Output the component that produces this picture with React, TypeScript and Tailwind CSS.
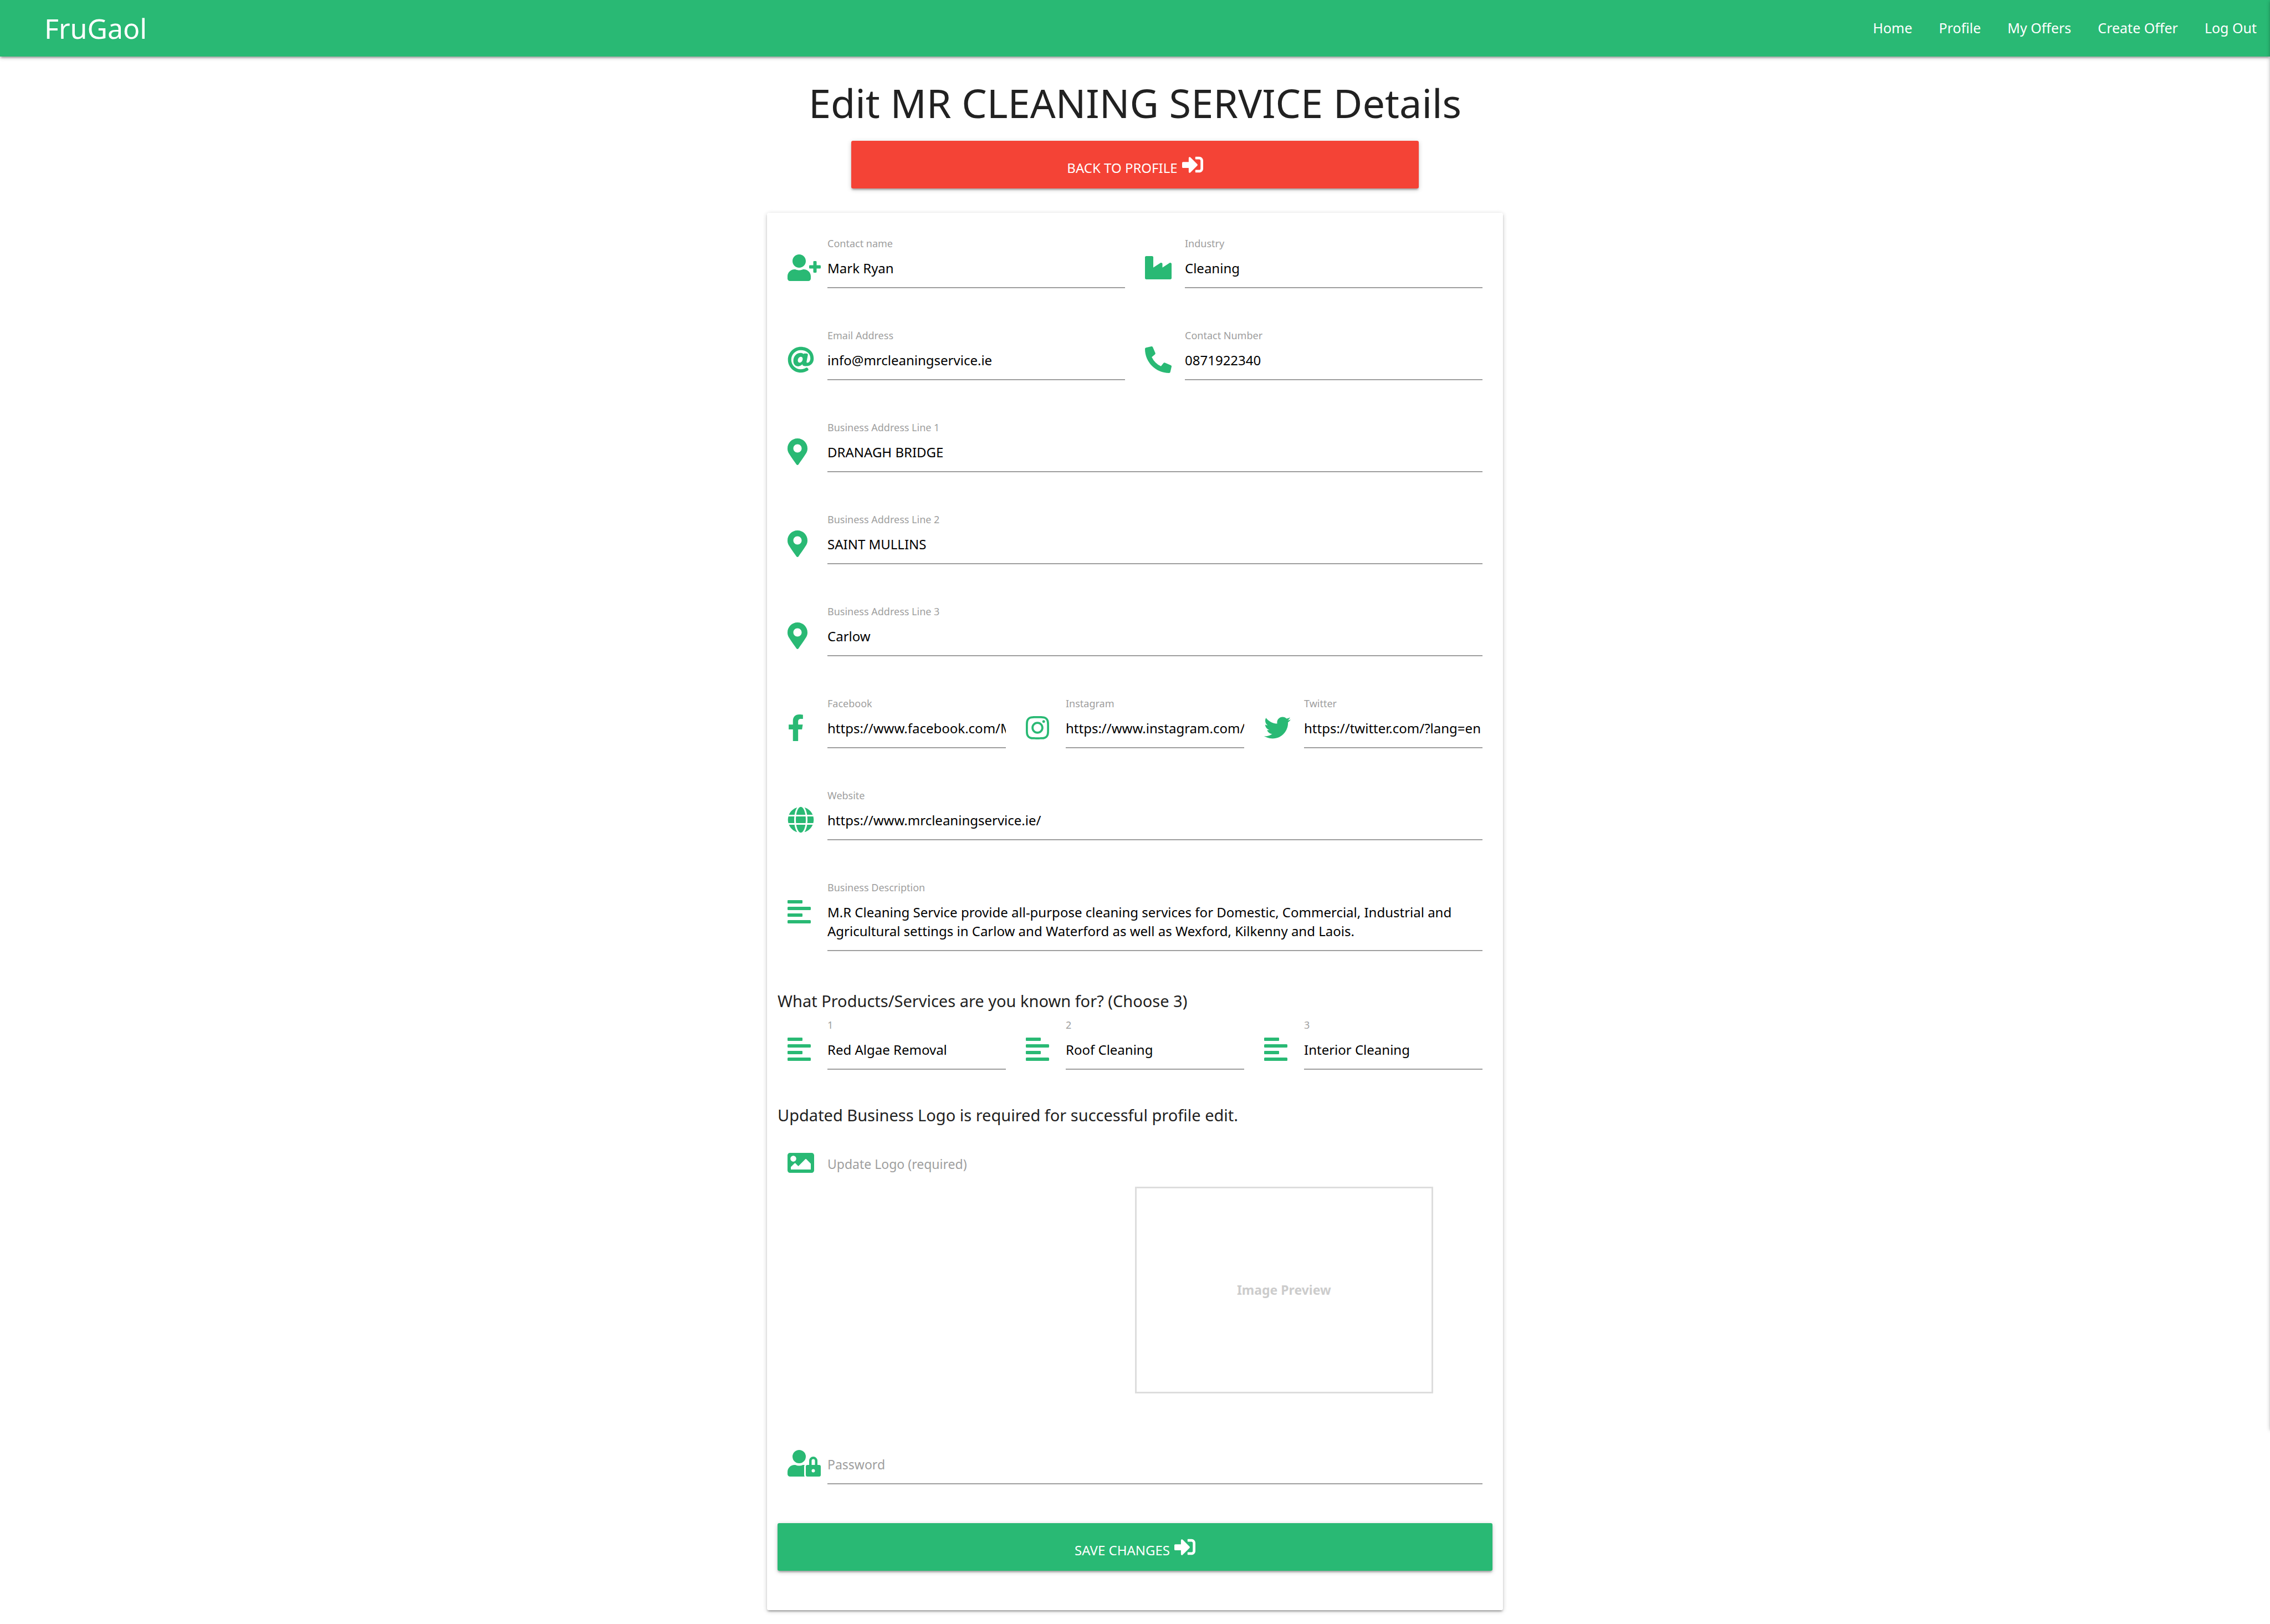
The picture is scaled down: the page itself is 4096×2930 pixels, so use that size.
import type { ReactNode } from 'react';
import type { IconType } from 'react-icons';
import {
  FaAlignLeft,
  FaAt,
  FaFacebookF,
  FaGlobe,
  FaImage,
  FaIndustry,
  FaInstagram,
  FaMapMarkerAlt,
  FaPhoneAlt,
  FaSignInAlt,
  FaTwitter,
  FaUserLock,
  FaUserPlus,
} from 'react-icons/fa';

const navLinks = ['Home', 'Profile', 'My Offers', 'Create Offer', 'Log Out'];

const elevation =
  'shadow-[0_3px_3px_0_rgba(0,0,0,0.14),0_5px_2px_-3px_rgba(0,0,0,0.12),0_2px_8px_0_rgba(0,0,0,0.2)]';

// Font Awesome glyphs share one height and differ in advance width.
const iconWidths = {
  narrow: 'w-[30px]',
  pin: 'w-9',
  medium: 'w-[42px]',
  square: 'w-12',
  wide: 'w-[60px]',
};

type IconWidth = keyof typeof iconWidths;

function FieldIcon({ icon: Icon, width = 'square' }: { icon: IconType; width?: IconWidth }) {
  return (
    <span className="block w-[72px] shrink-0 text-[#29b974]">
      <Icon className={`block h-12 ${iconWidths[width]}`} aria-hidden="true" />
    </span>
  );
}

type FieldProps = {
  id: string;
  label: string;
  value: string;
  icon: IconType;
  iconWidth?: IconWidth;
  type?: string;
};

function Field({ id, label, value, icon, iconWidth, type = 'text' }: FieldProps) {
  return (
    <div className="flex min-w-0 px-[18px]">
      <div className="shrink-0 pt-8">
        <FieldIcon icon={icon} width={iconWidth} />
      </div>
      <div className="min-w-0 flex-1">
        <label htmlFor={id} className="block text-lg leading-6 text-[#9e9e9e]">
          {label}
        </label>
        <input
          id={id}
          type={type}
          defaultValue={value}
          className="block h-[69px] w-full border-b-2 border-[#9e9e9e] bg-transparent pb-0.5 text-2xl text-black outline-none"
        />
      </div>
    </div>
  );
}

function SectionHeading({ children }: { children: ReactNode }) {
  return <h2 className="text-[29px] leading-10 text-[#212121]">{children}</h2>;
}

export default function App() {
  return (
    <div className="relative min-h-screen overflow-hidden bg-white font-['Noto_Sans','Open_Sans',sans-serif]">
      <header className={`relative flex h-[102px] items-center justify-between bg-[#29b974] text-white ${elevation}`}>
        <a href="#home" className="pl-20 text-[50px] leading-none">
          FruGaol
        </a>
        <nav className="flex">
          {navLinks.map((link) => (
            <a key={link} href="#nav" className="px-6 text-[25px]">
              {link}
            </a>
          ))}
        </nav>
      </header>

      <aside
        aria-hidden="true"
        className={`absolute top-0 left-full h-[88vh] w-80 bg-white ${elevation}`}
      />

      <main className="flex flex-col items-center pt-[43px] pb-6">
        <h1 className="text-7xl leading-[80px] text-[#212121]">Edit MR CLEANING SERVICE Details</h1>
        <a
          href="#profile"
          className={`mt-[29px] flex h-[86px] w-1/4 items-center justify-center gap-2 rounded-[3px] bg-[#f44336] text-2xl text-white uppercase ${elevation}`}
        >
          <span className="pt-3">Back to Profile</span>
          <FaSignInAlt className="size-[38px]" aria-hidden="true" />
        </a>

        <form
          onSubmit={(event) => event.preventDefault()}
          className={`mt-11 w-full max-w-[1328px] rounded-[3px] bg-white px-[19px] pt-[43px] pb-[71px] ${elevation}`}
        >
          <div className="flex flex-col gap-[73px]">
            <div className="grid grid-cols-2">
              <Field id="contact-name" label="Contact name" value="Mark Ryan" icon={FaUserPlus} iconWidth="wide" />
              <Field id="industry" label="Industry" value="Cleaning" icon={FaIndustry} />
            </div>
            <div className="grid grid-cols-2">
              <Field id="email" label="Email Address" value="info@mrcleaningservice.ie" icon={FaAt} type="email" />
              <Field id="phone" label="Contact Number" value="0871922340" icon={FaPhoneAlt} type="tel" />
            </div>
            <Field id="address-1" label="Business Address Line 1" value="DRANAGH BRIDGE" icon={FaMapMarkerAlt} iconWidth="pin" />
            <Field id="address-2" label="Business Address Line 2" value="SAINT MULLINS" icon={FaMapMarkerAlt} iconWidth="pin" />
            <Field id="address-3" label="Business Address Line 3" value="Carlow" icon={FaMapMarkerAlt} iconWidth="pin" />
            <div className="grid grid-cols-3">
              <Field id="facebook" label="Facebook" value="https://www.facebook.com/MRCleaning" icon={FaFacebookF} iconWidth="narrow" />
              <Field id="instagram" label="Instagram" value="https://www.instagram.com/" icon={FaInstagram} iconWidth="medium" />
              <Field id="twitter" label="Twitter" value="https://twitter.com/?lang=en" icon={FaTwitter} />
            </div>
            <Field id="website" label="Website" value="https://www.mrcleaningservice.ie/" icon={FaGlobe} />
            <div className="flex px-[18px]">
              <div className="shrink-0 pt-8">
                <FieldIcon icon={FaAlignLeft} width="medium" />
              </div>
              <div className="min-w-0 flex-1">
                <label htmlFor="description" className="block text-lg leading-6 text-[#9e9e9e]">
                  Business Description
                </label>
                <textarea
                  id="description"
                  rows={2}
                  defaultValue="M.R Cleaning Service provide all-purpose cleaning services for Domestic, Commercial, Industrial and Agricultural settings in Carlow and Waterford as well as Wexford, Kilkenny and Laois."
                  className="block w-full resize-none overflow-hidden border-b-2 border-[#9e9e9e] bg-transparent pt-4 pb-[17px] text-2xl leading-[34px] text-black outline-none"
                />
              </div>
            </div>
          </div>

          <div className="mt-[70px]">
            <SectionHeading>What Products/Services are you known for? (Choose 3)</SectionHeading>
            <div className="mt-[11px] grid grid-cols-3">
              <Field id="service-1" label="1" value="Red Algae Removal" icon={FaAlignLeft} iconWidth="medium" />
              <Field id="service-2" label="2" value="Roof Cleaning" icon={FaAlignLeft} iconWidth="medium" />
              <Field id="service-3" label="3" value="Interior Cleaning" icon={FaAlignLeft} iconWidth="medium" />
            </div>
          </div>

          <div className="mt-[62px]">
            <SectionHeading>Updated Business Logo is required for successful profile edit.</SectionHeading>
            <div className="mt-[42px] flex items-center px-[18px]">
              <FieldIcon icon={FaImage} />
              <label htmlFor="logo" className="pt-1 text-[23px] text-[#9e9e9e]">
                Update Logo (required)
              </label>
              <input id="logo" type="file" className="sr-only" />
            </div>
            <div className="mt-[19px] grid grid-cols-2">
              <div className="col-start-2 flex h-[373px] w-5/6 items-center justify-center border-3 border-[#dddddd] text-[23px] font-bold text-[#cccccc]">
                Image Preview
              </div>
            </div>
          </div>

          <div className="mt-[70px] flex px-[18px]">
            <div className="shrink-0 pt-8">
              <FieldIcon icon={FaUserLock} width="wide" />
            </div>
            <input
              type="password"
              aria-label="Password"
              placeholder="Password"
              className="mt-6 block h-[70px] min-w-0 flex-1 border-b-2 border-[#9e9e9e] bg-transparent text-[23px] outline-none placeholder:text-[#9e9e9e]"
            />
          </div>

          <button
            type="submit"
            className={`mt-[70px] flex h-[86px] w-full items-center justify-center gap-2 rounded-[3px] bg-[#29b974] text-2xl text-white uppercase ${elevation}`}
          >
            <span className="pt-3">Save Changes</span>
            <FaSignInAlt className="size-[38px]" aria-hidden="true" />
          </button>
        </form>
      </main>
    </div>
  );
}
